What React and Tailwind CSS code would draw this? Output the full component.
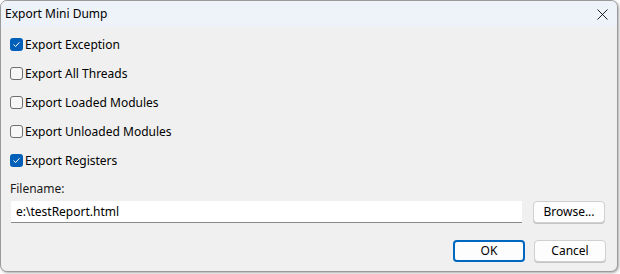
import { X } from 'lucide-react';

const options = [
  { label: 'Export Exception', checked: true },
  { label: 'Export All Threads', checked: false },
  { label: 'Export Loaded Modules', checked: false },
  { label: 'Export Unloaded Modules', checked: false },
  { label: 'Export Registers', checked: true },
];

function Checkbox({ checked }) {
  if (checked) {
    return (
      <span className="flex h-[13px] w-[13px] items-center justify-center rounded-[3px] bg-[#005fb8]">
        <svg width="9" height="9" viewBox="0 0 9 9" fill="none">
          <path d="M1.8 4.8 L3.6 6.5 L7.2 2.6" stroke="#fff" strokeWidth="1" strokeLinecap="round" strokeLinejoin="round" />
        </svg>
      </span>
    );
  }
  return <span className="h-[13px] w-[13px] rounded-[3px] border border-[#6e6e6e] bg-[#f7f7f7]" />;
}

function Button({ children, primary }) {
  return (
    <button
      className={`flex h-[22px] w-[72px] items-center justify-center rounded-[4px] bg-[#fdfdfd] text-[12px] text-black ${
        primary ? 'border-2 border-[#0067c0]' : 'border border-[#d0d0d0] shadow-[0_1px_0_#c4c4c4]'
      }`}
    >
      {children}
    </button>
  );
}

export default function App() {
  return (
    <div className="h-[274px] w-[620px] bg-white font-['Segoe_UI','Noto_Sans',sans-serif]">
      <div className="flex h-[272px] w-[618px] flex-col overflow-hidden rounded-[7px] border border-[#9a9a9a] bg-[#f0f0f0] shadow-[1px_1px_3px_rgba(0,0,0,0.35)]">
        <div className="flex h-[26px] shrink-0 items-center justify-between bg-[#eef2f9] pl-[4px] pr-[5px]">
          <span className="text-[12px] text-black">Export Mini Dump</span>
          <X size={19} strokeWidth={1.1} className="text-black" />
        </div>

        <div className="flex flex-col pl-[9px] pt-[3px]">
          {options.map((o) => (
            <label key={o.label} className="flex h-[29px] items-center gap-[2px]">
              <Checkbox checked={o.checked} />
              <span className="text-[12px] text-black">{o.label}</span>
            </label>
          ))}
        </div>

        <div className="pl-[9px] pt-[5px] text-[12px] text-[#1a1a1a]">Filename:</div>

        <div className="mt-[3px] flex items-center gap-[11px] pl-[10px]">
          <div className="flex h-[22px] w-[511px] items-center border-b border-[#8a8a8a] bg-white pl-[5px] text-[12px] text-black">
            e:\testReport.html
          </div>
          <Button>Browse...</Button>
        </div>

        <div className="mt-[17px] flex justify-end gap-[9px] pr-[11px]">
          <Button primary>OK</Button>
          <Button>Cancel</Button>
        </div>
      </div>
    </div>
  );
}
